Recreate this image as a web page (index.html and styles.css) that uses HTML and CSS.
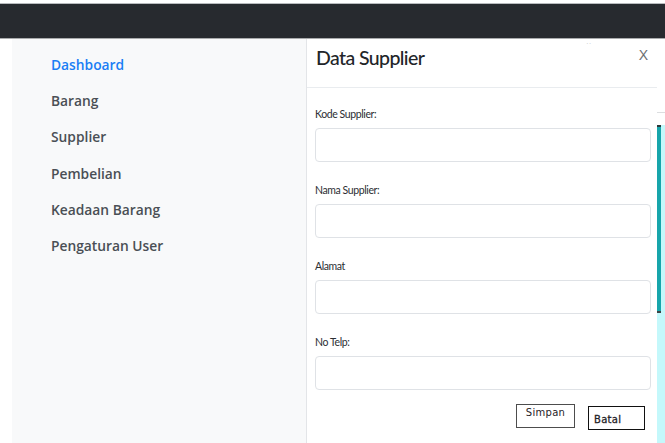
FILE: index.html
```html
<!DOCTYPE html>
<html lang="id">
<head>
<meta charset="utf-8">
<title>Data Supplier</title>
<link rel="stylesheet" href="styles.css">
</head>
<body>
  <header class="topbar"></header>
  <div class="layout">
    <nav class="sidebar">
      <a class="nav-link active" href="#">Dashboard</a>
      <a class="nav-link" href="#">Barang</a>
      <a class="nav-link" href="#">Supplier</a>
      <a class="nav-link" href="#">Pembelian</a>
      <a class="nav-link" href="#">Keadaan Barang</a>
      <a class="nav-link" href="#">Pengaturan User</a>
    </nav>
    <section class="modal">
      <div class="modal-header">
        <h2 class="modal-title">Data Supplier</h2>
        <span class="dots">· ·</span>
        <button class="close" type="button">X</button>
      </div>
      <form class="modal-body">
        <label class="field-label">Kode Supplier:</label>
        <input class="field-input" type="text">
        <label class="field-label">Nama Supplier:</label>
        <input class="field-input" type="text">
        <label class="field-label">Alamat</label>
        <input class="field-input" type="text">
        <label class="field-label">No Telp:</label>
        <input class="field-input" type="text">
      </form>
      <div class="modal-footer">
        <button class="btn btn-save" type="button">Simpan</button>
        <button class="btn btn-cancel" type="button">Batal</button>
      </div>
    </section>
    <aside class="edge">
      <div class="edge-top"></div>
      <div class="edge-rule"></div>
      <div class="edge-gap"></div>
      <div class="edge-bar">
        <div class="edge-teal"></div>
        <div class="edge-cyan"></div>
      </div>
      <div class="edge-bottom"></div>
    </aside>
  </div>
</body>
</html>
```
FILE: styles.css
```css
html, body {
  margin: 0;
  padding: 0;
  background: #ffffff;
  width: 665px;
  height: 443px;
  overflow: hidden;
}

.topbar {
  height: 34px;
  margin-top: 3px;
  background: #272a2f;
  border-top: 1px solid #b9bbbe;
  border-bottom: 1px solid #a9abad;
}

.layout {
  display: flex;
  height: 405px;
}

/* left navigation */
.sidebar {
  margin-left: 12px;
  width: 294px;
  background: #f8f9fa;
  display: flex;
  flex-direction: column;
  padding-top: 16px;
  box-sizing: border-box;
}

.nav-link {
  font-family: "Open Sans", sans-serif;
  font-weight: 600;
  font-size: 13.8px;
  line-height: 20px;
  height: 36.2px;
  padding-left: 39px;
  color: #4a4f55;
  text-decoration: none;
}

.nav-link.active {
  color: #1a7ef5;
}

/* dialog */
.modal {
  width: 351px;
  background: #ffffff;
  border-left: 1px solid #e3e5e8;
  box-sizing: border-box;
  display: flex;
  flex-direction: column;
}

.modal-header {
  height: 49px;
  border-bottom: 1px solid #e9ecef;
  display: flex;
  align-items: flex-start;
  padding: 7px 9px 0 9px;
  box-sizing: border-box;
  position: relative;
}

.modal-title {
  margin: 0;
  font-family: Lato, sans-serif;
  font-weight: 500;
  font-size: 19.5px;
  line-height: 24px;
  letter-spacing: -0.6px;
  color: #222529;
  flex: 1;
}

.dots {
  position: absolute;
  left: 279px;
  top: 0;
  font-size: 8px;
  line-height: 10px;
  color: #c8cacc;
  letter-spacing: -1px;
}

.close {
  border: none;
  background: none;
  font-family: "Liberation Sans", sans-serif;
  font-size: 14px;
  line-height: 16px;
  color: #6c6f73;
  padding: 0;
  margin-right: 0;
  margin-top: 1px;
}

.modal-body {
  display: flex;
  flex-direction: column;
  padding: 19px 6px 0 8px;
}

.field-label {
  font-family: Lato, sans-serif;
  font-size: 10.5px;
  line-height: 14px;
  color: #2b2e32;
  letter-spacing: -0.4px;
  margin-bottom: 7px;
}

.field-input {
  height: 34px;
  box-sizing: border-box;
  border: 1px solid #dfe2e6;
  border-radius: 4px;
  margin: 0 0 21px 0;
  padding: 0;
  background: #ffffff;
}

.modal-footer {
  display: flex;
  align-items: flex-start;
  padding: 0 0 0 209px;
  margin-top: -7px;
}

.btn {
  font-family: "DejaVu Sans", sans-serif;
  font-size: 10px;
  color: #1f2226;
  background: #ffffff;
  padding: 0;
  box-sizing: border-box;
}

.btn-save {
  width: 59px;
  height: 24px;
  border: 1px solid #4d4d4d;
  padding-bottom: 7px;
  letter-spacing: 0.3px;
}

.btn-cancel {
  width: 57px;
  height: 24px;
  margin-left: 13px;
  margin-top: 2px;
  border: 1px solid #111111;
  text-align: left;
  padding-left: 5px;
  padding-top: 3px;
  letter-spacing: 0.3px;
  -webkit-text-stroke: 0.3px #1f2226;
}

/* sliver of the page visible past the dialog */
.edge {
  width: 8px;
  display: flex;
  flex-direction: column;
}

.edge-top {
  height: 73px;
}

.edge-rule {
  height: 1px;
  background: #dcdee0;
}

.edge-gap {
  height: 12px;
}

.edge-bar {
  height: 188px;
  display: flex;
}

.edge-teal {
  width: 4px;
  background: #17a5ab;
  border-top: 2px solid #2a3a3c;
  border-bottom: 2px solid #3c4446;
  box-sizing: border-box;
}

.edge-cyan {
  flex: 1;
  background: #c4f8fb;
}

.edge-bottom {
  flex: 1;
  background: #c4f8fb;
}
```
